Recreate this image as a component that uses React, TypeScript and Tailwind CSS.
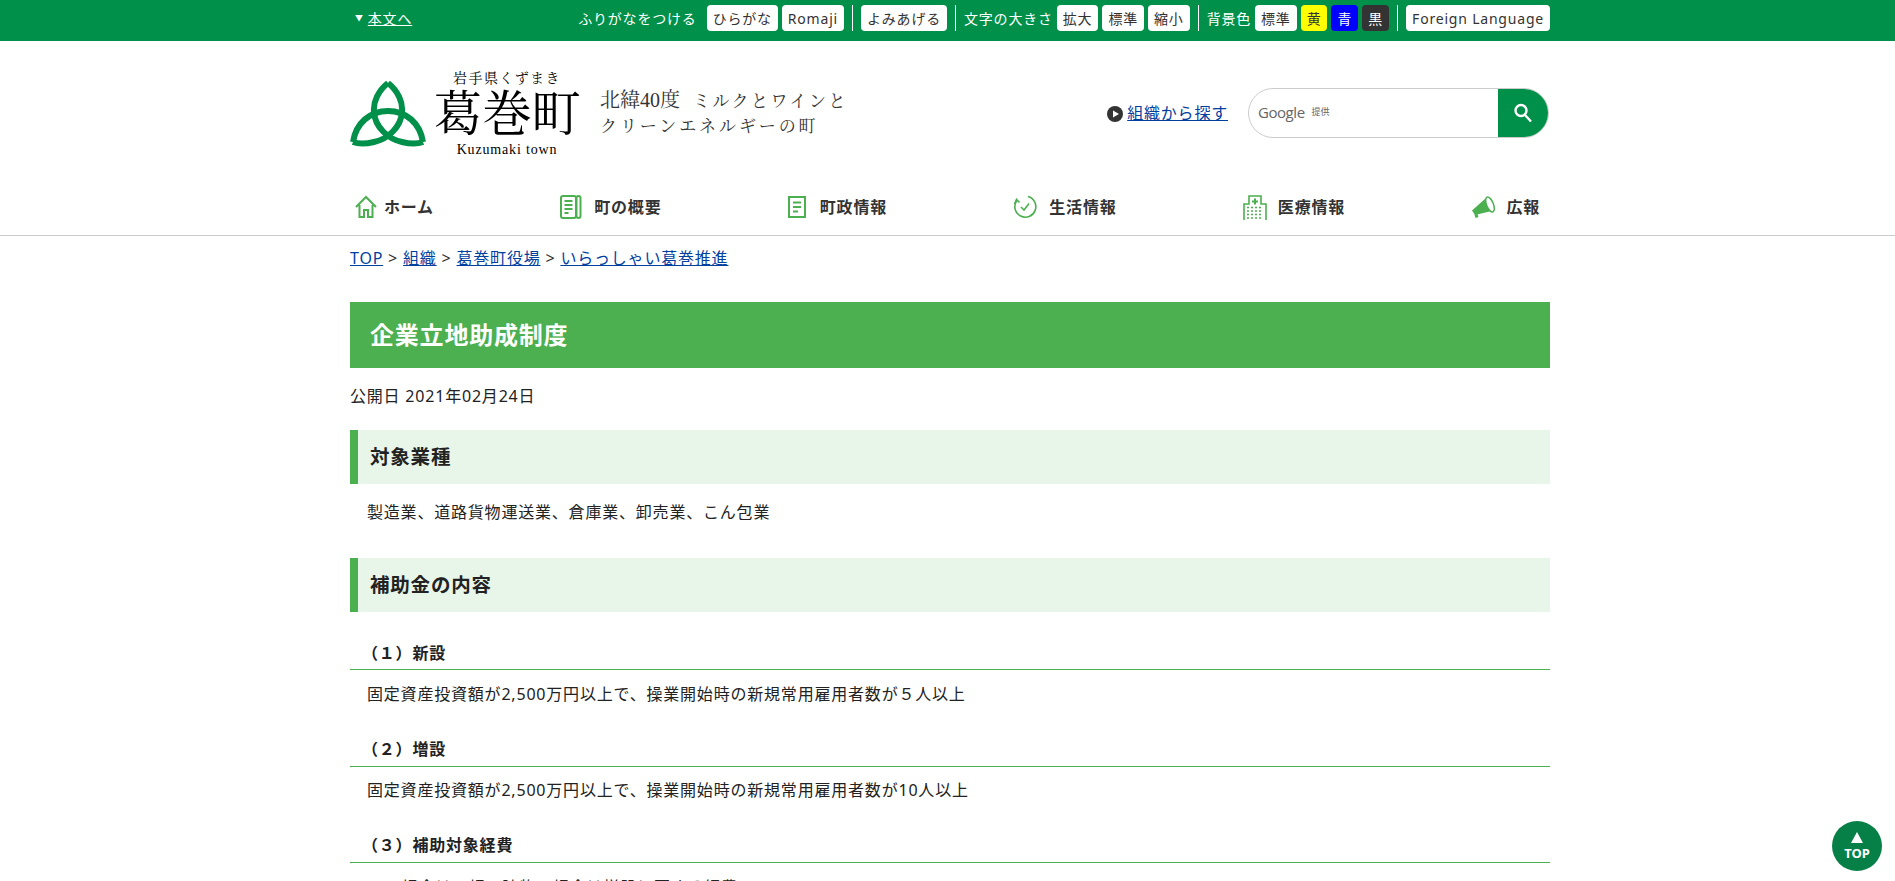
import React from "react";

const Btn = ({ children, className = "bg-white text-[#333]" }: { children: React.ReactNode; className?: string }) => (
  <span className={`inline-flex h-[26px] items-center justify-center rounded-[4px] px-[6px] text-[14px] ${className}`}>{children}</span>
);
const Sep = () => <span className="mx-[8px] h-[26px] w-px bg-white" />;

const Logo = () => (
  <svg width="76" height="68" viewBox="0 0 76 68" className="mt-[2px] shrink-0" fill="none" stroke="#00904a" strokeWidth="6" strokeLinejoin="miter">
    <path d="M38 3 C28 11 23 22 24 32 C25 47 38 59 52 62 C60 64 68 64 73 62" />
    <path d="M38 3 C48 11 53 22 52 32 C51 47 38 59 24 62 C16 64 8 64 3 62" />
    <path d="M3 62 C6 43 20 31 38 31 C56 31 70 43 73 62" />
  </svg>
);

const icons: Record<string, React.ReactNode> = {
  home: (
    <svg width="22" height="24" viewBox="0 0 22 24" fill="none" stroke="#4caf50" strokeWidth="2"><path d="M1 12 11 2l10 10M4.5 10v12h4.5v-7h4v7h4.5V10" /></svg>
  ),
  book: (
    <svg width="22" height="25" viewBox="0 0 22 25" fill="none" stroke="#4caf50" strokeWidth="2"><rect x="1" y="1" width="15" height="22" rx="2" /><rect x="16.5" y="1" width="4" height="22" rx="2" /><path d="M4.5 6h8M4.5 10h8M4.5 14h8M4.5 18h4" /></svg>
  ),
  doc: (
    <svg width="19" height="22" viewBox="0 0 19 22" fill="none" stroke="#4caf50" strokeWidth="2"><rect x="1" y="1" width="16" height="20" /><path d="M5 6.5h8M5 11h8M5 15.5h5" /></svg>
  ),
  clock: (
    <svg width="24" height="26" viewBox="0 0 24 26" fill="none" stroke="#4caf50" strokeWidth="1.6"><path d="M15 2.5A10.5 10.5 0 1 1 3.5 7" /><path d="M1.5 10 3.5 5.5l3 3" /><path d="M8 13l3 3 5-6.5" /></svg>
  ),
  hospital: (
    <svg width="24" height="25" viewBox="0 0 24 25" fill="none" stroke="#4caf50" strokeWidth="1.6"><path d="M1 25V9h5V1h12v8h5v16" /><path d="M12 3.5v6M9 6.5h6" strokeWidth="2" /><path d="M4 12.5h16M4 16h16M4 19.5h16M4 23h16" strokeDasharray="2 2" /></svg>
  ),
  horn: (
    <svg width="25" height="24" viewBox="0 0 25 24"><path d="M1 15.5 15 3l5.5 13L4 20z" fill="#4caf50" /><ellipse cx="19" cy="9.5" rx="3.4" ry="8" transform="rotate(-22 19 9.5)" fill="#fff" stroke="#4caf50" strokeWidth="1.5" /><path d="M3.5 19.5l1 3.5 3-1-1-3" fill="#4caf50" /></svg>
  ),
};

const nav = [
  ["home", "ホーム", "gap-[7px]"],
  ["book", "町の概要", "gap-[12px]"],
  ["doc", "町政情報", "gap-[13px]"],
  ["clock", "生活情報", "gap-[12px]"],
  ["hospital", "医療情報", "gap-[11px]"],
  ["horn", "広報", "gap-[10px]"],
] as const;

const H2 = ({ children }: { children: React.ReactNode }) => (
  <h2 className="flex h-[54px] items-center border-l-[8px] border-[#4caf50] bg-[#e8f5e9] pl-[12px] text-[19.5px] font-bold text-[#222]">{children}</h2>
);
const H3 = ({ children, className = "pb-[5px]" }: { children: React.ReactNode; className?: string }) => (
  <h3 className={`border-b border-[#4caf50] pl-[12px] text-[16px] font-bold leading-[24px] text-[#222] ${className}`}>{children}</h3>
);
const P = ({ children, className = "" }: { children: React.ReactNode; className?: string }) => (
  <p className={`pl-[17px] leading-[24px] text-[#222] ${className}`}>{children}</p>
);
const L = ({ children }: { children: React.ReactNode }) => <a className="text-[#00409f] underline">{children}</a>;

export default function App() {
  return (
    <div className="h-[881px] overflow-hidden bg-white font-['Noto_Sans','Noto_Sans_CJK_JP',sans-serif] text-[16px] tracking-[0.05em] text-[#222]">
      <div className="h-[41px] bg-[#00904a]">
        <div className="ml-[350px] flex h-[36px] w-[1200px] items-center text-[14px] text-white">
          <span className="ml-[5px] mr-[4px] text-[8px]">▼</span>
          <a className="underline">本文へ</a>
          <span className="ml-auto mr-[10px]">ふりがなをつける</span>
          <span className="flex gap-[4px]"><Btn>ひらがな</Btn><Btn>Romaji</Btn></span>
          <Sep />
          <Btn>よみあげる</Btn>
          <Sep />
          <span className="mr-[4px]">文字の大きさ</span>
          <span className="flex gap-[4px]"><Btn>拡大</Btn><Btn>標準</Btn><Btn>縮小</Btn></span>
          <Sep />
          <span className="mr-[4px]">背景色</span>
          <span className="flex gap-[4px]">
            <Btn>標準</Btn>
            <Btn className="bg-[#ffff00] text-[#333]">黄</Btn>
            <Btn className="bg-[#0000ff] text-white">青</Btn>
            <Btn className="bg-[#333] text-white">黒</Btn>
          </span>
          <Sep />
          <Btn>Foreign Language</Btn>
        </div>
      </div>

      <div className="ml-[350px] flex h-[134px] w-[1200px] items-center pt-[10px]">
        <Logo />
        <div className="ml-[7px] flex w-[148px] flex-col items-center whitespace-nowrap font-['Liberation_Serif','Noto_Serif_CJK_JP',serif] tracking-normal text-black">
          <span className="text-[14px] leading-[17px] tracking-[0.1em]">岩手県くずまき</span>
          <span className="text-[49px] leading-[56px]">葛巻町</span>
          <span className="text-[14px] leading-[14px] tracking-[0.06em]">Kuzumaki town</span>
        </div>
        <div className="ml-[19px] whitespace-nowrap font-['Liberation_Serif','Noto_Serif_CJK_JP',serif] leading-[25px] tracking-normal text-[#333]">
          <div className="text-[20px]">北緯40度<span className="ml-[13px] text-[17px] tracking-[0.145em]">ミルクとワインと</span></div>
          <div className="text-[17px] tracking-[0.17em]">クリーンエネルギーの町</div>
        </div>
        <div className="ml-auto mr-[1px] flex items-center">
          <svg width="16" height="16" viewBox="0 0 16 16" className="mr-[4px] mt-[2px]"><circle cx="8" cy="8" r="8" fill="#333" /><path d="M6 4.5 12 8l-6 3.5z" fill="#fff" /></svg>
          <a className="text-[#00409f] underline">組織から探す</a>
          <div className="ml-[20px] flex h-[50px] w-[301px] overflow-hidden rounded-full border border-[#ccc]">
            <div className="flex flex-1 items-center pb-[2px] pl-[9px] tracking-normal text-[#666]">
              <span className="font-['Open_Sans',sans-serif] text-[15px] tracking-[-0.03em]">Google</span>
              <span className="ml-[7px] text-[9px]">提供</span>
            </div>
            <div className="flex w-[50px] items-center justify-center bg-[#00904a]">
              <svg width="22" height="22" viewBox="0 0 22 22" fill="none" stroke="#fff" strokeWidth="2.4"><circle cx="9" cy="8.5" r="5.5" /><path d="M13 13l6 6.5" /></svg>
            </div>
          </div>
        </div>
      </div>

      <div className="border-b border-[#ccc]">
        <nav className="ml-[350px] flex h-[60px] w-[1200px] items-center justify-between pl-[5px] pr-[10px] pt-[4px]">
          {nav.map(([k, label, gap]) => (
            <div key={label} className={`flex items-center font-bold text-[#333] ${gap}`}>
              {icons[k]}
              <span>{label}</span>
            </div>
          ))}
        </nav>
      </div>

      <main className="ml-[350px] w-[1200px]">
        <div className="mt-[10px] leading-[24px] text-[#333]">
          <L>TOP</L> &gt; <L>組織</L> &gt; <L>葛巻町役場</L> &gt; <L>いらっしゃい葛巻推進</L>
        </div>
        <h1 className="mt-[32px] flex h-[66px] items-center bg-[#4caf50] pl-[20px] text-[24px] font-bold text-white">企業立地助成制度</h1>
        <p className="mt-[16px] leading-[24px]">公開日 2021年02月24日</p>
        <div className="mt-[22px]"><H2>対象業種</H2></div>
        <P className="mt-[16px]">製造業、道路貨物運送業、倉庫業、卸売業、こん包業</P>
        <div className="mt-[34px]"><H2>補助金の内容</H2></div>
        <div className="mt-[29px]"><H3 className="pb-[4px]">（１）新設</H3></div>
        <P className="mt-[12px]">固定資産投資額が2,500万円以上で、操業開始時の新規常用雇用者数が５人以上</P>
        <div className="mt-[31px]"><H3>（２）増設</H3></div>
        <P className="mt-[11px]">固定資産投資額が2,500万円以上で、操業開始時の新規常用雇用者数が10人以上</P>
        <div className="mt-[31px]"><H3>（３）補助対象経費</H3></div>
        <P className="mt-[12px] pl-[52px]">場合は工場の建物、場合は増設に要する経費</P>
      </main>

      <div className="fixed bottom-[10px] right-[13px] flex h-[50px] w-[50px] flex-col items-center justify-center rounded-full bg-[#078047] tracking-normal text-white">
        <span className="h-0 w-0 border-x-[6px] border-b-[11px] border-x-transparent border-b-white" />
        <span className="mt-[3px] text-[13px] font-bold leading-[14px]">TOP</span>
      </div>
    </div>
  );
}
